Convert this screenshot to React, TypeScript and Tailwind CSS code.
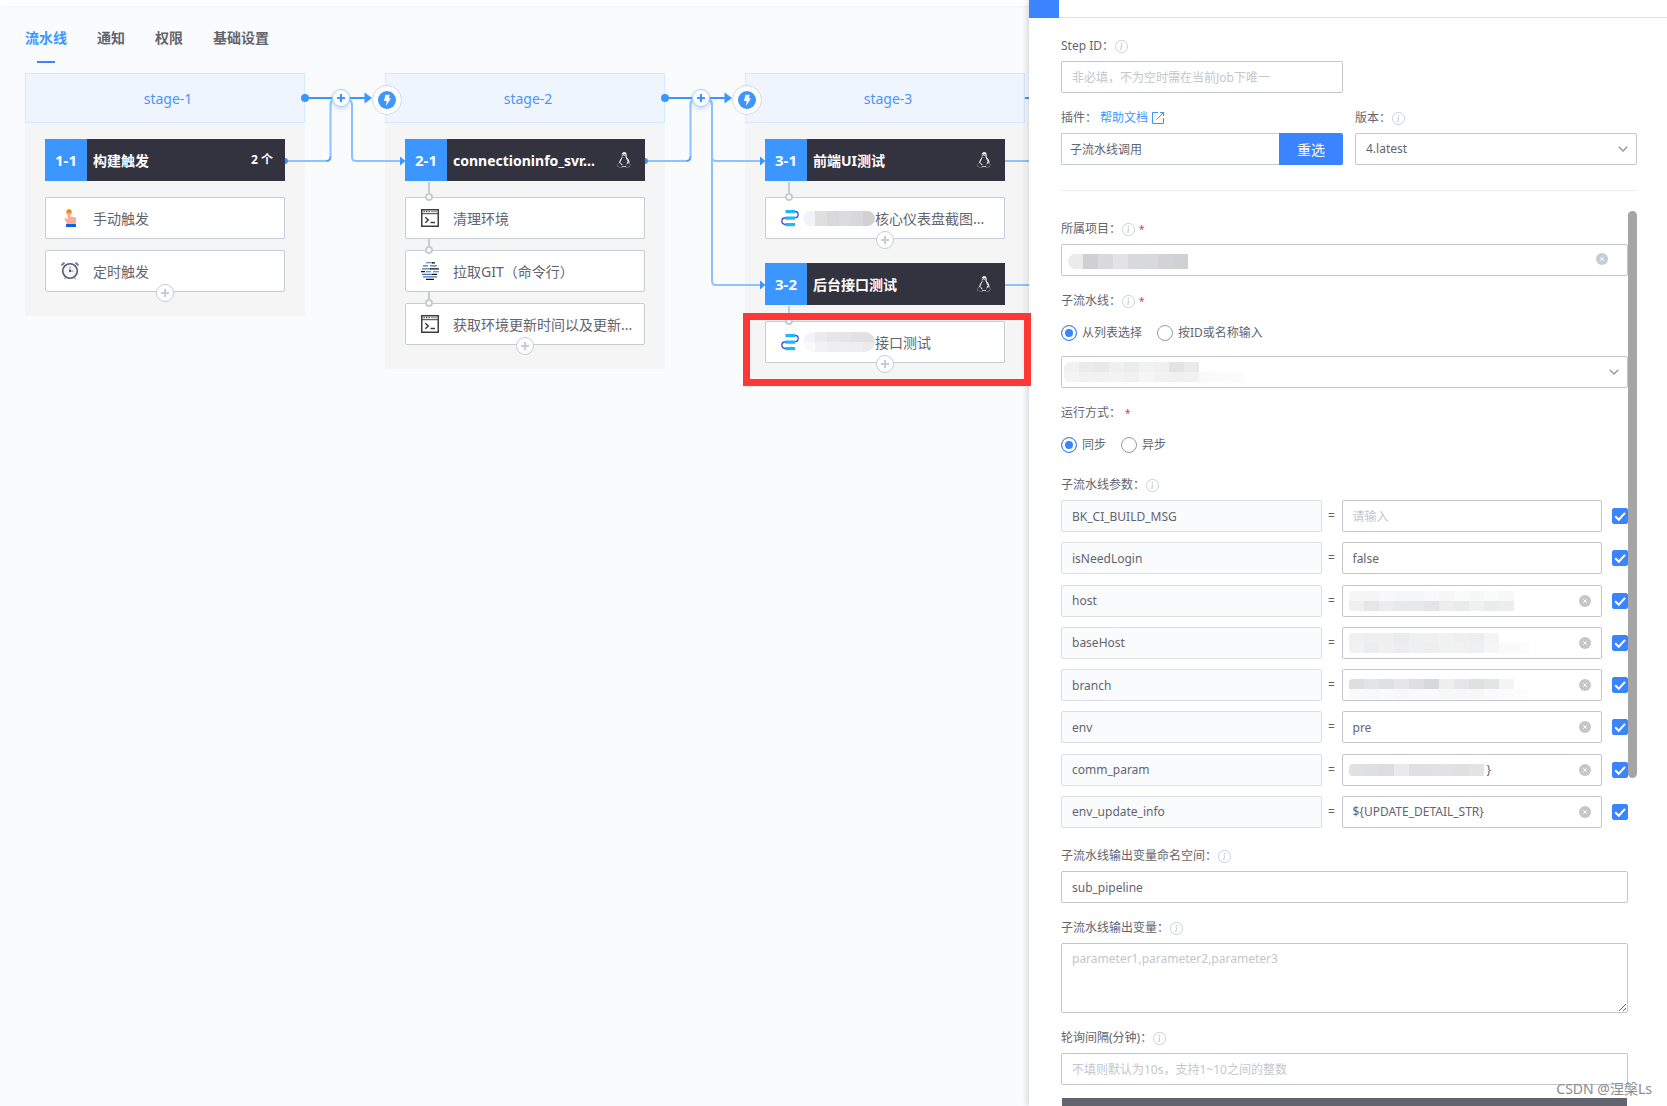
import type { ReactNode } from 'react';
import { FaLinux } from 'react-icons/fa';
import { BsInfoCircle } from 'react-icons/bs';
import clsx from 'clsx';

type IconName = 'hand' | 'clock' | 'terminal' | 'git' | 'sub';

interface TaskData {
  name: string;
  icon: IconName;
  masked?: 'tall' | 'short';
  marked?: boolean;
}

interface JobData {
  id: string;
  name: string;
  count?: string;
  tasks: TaskData[];
}

interface StageData {
  name: string;
  jobs: JobData[];
}

const TABS = ['流水线', '通知', '权限', '基础设置'];

const STAGES: StageData[] = [
  {
    name: 'stage-1',
    jobs: [
      {
        id: '1-1',
        name: '构建触发',
        count: '2 个',
        tasks: [
          { name: '手动触发', icon: 'hand' },
          { name: '定时触发', icon: 'clock' },
        ],
      },
    ],
  },
  {
    name: 'stage-2',
    jobs: [
      {
        id: '2-1',
        name: 'connectioninfo_svr...',
        tasks: [
          { name: '清理环境', icon: 'terminal' },
          { name: '拉取GIT（命令行）', icon: 'git' },
          { name: '获取环境更新时间以及更新...', icon: 'terminal' },
        ],
      },
    ],
  },
  {
    name: 'stage-3',
    jobs: [
      { id: '3-1', name: '前端UI测试', tasks: [{ name: '核心仪表盘截图...', icon: 'sub', masked: 'short' }] },
      { id: '3-2', name: '后台接口测试', tasks: [{ name: '接口测试', icon: 'sub', masked: 'tall', marked: true }] },
    ],
  },
];

interface Param {
  name: string;
  value: string;
  clear?: boolean;
  mask?: string[][];
  maskLow?: boolean;
}

const PARAMS: Param[] = [
  { name: 'BK_CI_BUILD_MSG', value: '' },
  { name: 'isNeedLogin', value: 'false' },
  {
    name: 'host',
    value: '',
    clear: true,
    mask: [
      ['#f6f6f7', '#f5f5f6', '#f8f8f8', '#f5f6f6', '#f6f8f7', '#f9f9f9', '#f6f6f7', '#fafafa', '#f6f7f7', '#fafafa', '#f8f8f9'],
      ['#f0f0f1', '#e5e6e7', '#ececee', '#e8e9ea', '#e9e9eb', '#e4e4e6', '#ededee', '#e9ebea', '#eff0f0', '#eaecec', '#ebecee'],
    ],
  },
  {
    name: 'baseHost',
    value: '',
    clear: true,
    mask: [
      ['#f0f0f1', '#efeff0', '#eeeff0', '#eaebec', '#eff0f0', '#f0f0f1', '#f1f2f2', '#efefef', '#eeeeef', '#f4f4f4'],
      ['#f1f1f2', '#ebeced', '#f0f0f1', '#ededef', '#eff0f1', '#eeeeef', '#f0f1f1', '#f1f1f2', '#eeeff0', '#f6f6f6', '#fafafa', '#fbfbfb'],
    ],
  },
  {
    name: 'branch',
    value: '',
    clear: true,
    maskLow: true,
    mask: [
      ['#dddee0', '#e3e4e5', '#dfe0e2', '#e6e6e8', '#dfdfe1', '#d7d8da', '#eeeeef', '#e6e6e8', '#dfe1e1', '#e4e5e6', '#f3f4f4'],
      ['#f9f9fa', '#f7f8f8', '#fafafa', '#f8f8f9', '#fafafa', '#fafafa', '#f6f8f7', '#f8f8f8', '#f7f7f8', '#fafafa', '#fbfbfb', '#fcfcfc'],
    ],
  },
  { name: 'env', value: 'pre', clear: true },
  {
    name: 'comm_param',
    value: '}',
    clear: true,
    maskLow: true,
    mask: [['#e1e1e3', '#dedfe0', '#dddddf', '#eaeaee', '#e0e0e2', '#e1e1e3', '#e2e2e4', '#e0e0e1', '#e3e3e5']],
  },
  { name: 'env_update_info', value: '${UPDATE_DETAIL_STR}', clear: true },
];

const inputBase = 'h-8 w-full rounded-xs border border-[#c4c6cc] bg-white px-[10px] text-[12px] text-[#63656e] outline-none placeholder:text-[#c4c6cc]';

export default function App() {
  return (
    <div className="flex h-screen overflow-hidden bg-[#fafbfd] font-['Noto_Sans','Noto_Sans_CJK_SC',sans-serif] text-[#63656e]">
      <main className="min-w-0 flex-1">
        <div className="h-1.5 bg-white shadow-[0_1px_3px_rgba(0,0,0,0.04)]" />
        <nav className="flex gap-[30px] pl-[25px]">
          {TABS.map((tab, i) => (
            <button
              key={tab}
              className={clsx('relative h-[57px] pb-[15px] pt-[22px] text-[14px] font-bold leading-5', i === 0 && 'text-[#3c96ff]')}
            >
              {tab}
              {i === 0 && <span className="absolute bottom-0 left-3 h-0.5 w-[18px] bg-[#3a84ff]" />}
            </button>
          ))}
        </nav>
        <div className="flex items-start pl-[25px] pt-[10px]">
          {STAGES.map((stage, i) => (
            <div key={stage.name} className="flex shrink-0 items-start">
              <Stage stage={stage} />
              {i < STAGES.length - 1 ? <Connector targets={STAGES[i + 1].jobs.length} /> : <OpenEnd />}
            </div>
          ))}
        </div>
      </main>
      <PluginPanel />
      <span className="absolute bottom-[7px] right-[15px] z-20 text-[14px] leading-5 text-[#8c8c8c] [text-shadow:1px_1px_0_#ffffff]">
        CSDN @涅槃Ls
      </span>
    </div>
  );
}

/* ---------- pipeline ---------- */

function Stage({ stage }: { stage: StageData }) {
  return (
    <section className="w-[280px] shrink-0">
      <h3 className="flex h-[50px] items-center justify-center border border-[#d4e8ff] bg-[#eff5ff] pl-1.5 text-[14px] text-[#4b94f5]">
        {stage.name}
      </h3>
      <div className="flex flex-col gap-6 rounded-b-xs bg-[#f5f5f5] px-5 pb-6 pt-4">
        {stage.jobs.map(job => (
          <Job key={job.id} job={job} />
        ))}
      </div>
    </section>
  );
}

function Job({ job }: { job: JobData }) {
  return (
    <div>
      <div className="flex h-[42px] items-center bg-[#33333f] text-[14px] font-bold text-white">
        <span className="flex size-[42px] items-center justify-center bg-[#3c96ff] text-[15px]">{job.id}</span>
        <span className="flex-1 truncate pl-1.5">{job.name}</span>
        {job.count ? (
          <span className="pr-3 text-[12px]">{job.count}</span>
        ) : (
          <FaLinux className="mr-[13px] size-4 shrink-0 text-[#e8e8ea]" />
        )}
      </div>
      <ul className="mt-4 flex flex-col gap-[11px]">
        {job.tasks.map((task, i) => (
          <Task key={task.name} task={task} first={i === 0} last={i === job.tasks.length - 1} linked={!job.count} />
        ))}
      </ul>
    </div>
  );
}

function Task({ task, first, last, linked }: { task: TaskData; first: boolean; last: boolean; linked: boolean }) {
  return (
    <li className="relative flex h-[42px] items-center rounded-xs border border-[#c4cdd6] bg-white pl-[15px] text-[14px]">
      {linked && (
        <>
          <span className={clsx('absolute left-[22px] w-0.5 bg-[#c4cdd6]', first ? '-top-4 h-3' : '-top-3 h-2')} />
          <span className="absolute -top-[5px] left-[19px] size-2 rounded-full border-2 border-[#c4cdd6] bg-white" />
        </>
      )}
      <TaskIcon name={task.icon} />
      {task.masked && (
        <span className="ml-1 flex w-[72px] flex-col overflow-hidden rounded-full">
          <Mosaic
            size={task.masked === 'tall' ? 'sm' : 'lg'}
            rows={
              task.masked === 'tall'
                ? [['#f1f4fb', '#ebebee', '#e6e6e8', '#e5e5e7', '#e2e2e4', '#e1e1e3'], ['#fafafa', '#f2f2f3', '#eeeeef', '#efeff0', '#eeeeef', '#ebebec']]
                : [['#f0f3fa', '#dfdfe0', '#d9d9dc', '#dcdcde', '#d8d8da', '#d1d1d4']]
            }
          />
        </span>
      )}
      <span className={clsx('truncate', !task.masked && 'ml-[14px]')}>{task.name}</span>
      {last && (
        <button
          aria-label="添加插件"
          className="absolute -bottom-[11px] left-[110px] flex size-[18px] items-center justify-center rounded-full border border-[#c4cdd6] bg-white text-[#c4cdd6]"
        >
          <Plus />
        </button>
      )}
      {task.marked && <span className="pointer-events-none absolute -bottom-6 -left-[23px] -right-[27px] -top-[9px] z-20 border-[7px] border-[#ff3737]" />}
    </li>
  );
}

function Plus() {
  return (
    <svg viewBox="0 0 8 8" className="size-2" stroke="currentColor" strokeWidth="2">
      <path d="M4 0v8M0 4h8" />
    </svg>
  );
}

// lines between two stages, one branch for every job of the next stage
function Connector({ targets }: { targets: number }) {
  const ends = Array.from({ length: targets }, (_, i) => 88 + i * 124);
  return (
    <div className="relative w-20 shrink-0">
      <svg className="absolute left-0 top-0 h-60 w-20 overflow-visible" fill="none">
        <g stroke="#8ec1ff" strokeWidth="2">
          <path d="M-18 88H21q4.500 0 4.500-4.500V32q0-4 3-6" />
          {ends.map(y => (
            <path key={y} d={`M43 26q4 2 4 6V${y - 4}q0 4 4 4H96`} />
          ))}
        </g>
        <path d="M21 88q4.500 0 4.500-4.500" stroke="#3c96ff" strokeWidth="1.200" />
        <path d="M0 25h60" stroke="#3c96ff" strokeWidth="2" />
        <g fill="#3c96ff">
          <circle cx="0" cy="25" r="4" />
          <path d="M59.500 19.500 67 25l-7.500 5.500z" />
          <path d="M-20 85a3 3 0 0 1 0 6z" />
          {ends.map(y => (
            <path key={y} d={`M95 ${y - 4.5} 100.500 ${y}l-5.500 4.500z`} />
          ))}
        </g>
      </svg>
      <button
        aria-label="添加阶段"
        className="absolute left-[27px] top-4 flex size-[18px] items-center justify-center rounded-full border border-[#a9d1ff] bg-white text-[#3c96ff] shadow-[0_2px_4px_rgba(60,150,255,0.3)]"
      >
        <Plus />
      </button>
      <button
        aria-label="准入规则"
        className="absolute left-[67px] top-3 flex size-[30px] items-center justify-center rounded-full border border-[#d3d8e8] bg-white"
      >
        <svg viewBox="0 0 18 18" className="size-[18px]">
          <circle cx="9" cy="9" r="9" fill="#3c96ff" />
          <path d="M7.500 3.800h4.300L10.800 7.300h2.200L8 15l.7-5H6z" fill="#fff" />
        </svg>
      </button>
    </div>
  );
}

function OpenEnd() {
  return (
    <div className="relative w-1 shrink-0">
      <svg className="absolute left-0 top-0 h-60 w-1 overflow-visible">
        <path d="M0 25h8" stroke="#3c96ff" strokeWidth="2" />
        <path d="M-20 88H8M-20 212H8" stroke="#8ec1ff" strokeWidth="2" />
      </svg>
    </div>
  );
}

function TaskIcon({ name }: { name: IconName }) {
  return (
    <svg viewBox="0 0 18 18" className="size-[18px] shrink-0" fill="none">
      {name === 'hand' && (
        <>
          <circle cx="8" cy="3" r="3" fill="#ffb11f" />
          <circle cx="8" cy="3" r="1.700" fill="#f4511e" />
          <path d="M6.500 3.600q0-1.300 1.400-1.300T9.300 3.600V7.500l4.700.8q1.400.3 1.300 1.700l-.6 5H6.200L3.800 11q-.7-1.600.5-2l2.200 1.300z" fill="#ffab9b" />
          <path d="M6.700 3.400q0-1.200 1.200-1.200t1.200 1.200z" fill="#f4511e" />
          <rect x="5" y="15" width="10" height="3" rx=".5" fill="#0b5fe8" />
        </>
      )}
      {name === 'clock' && (
        <>
          <path d="M1.200 2.800 2.800 1.200M16.800 2.800 15.200 1.200" stroke="#6f7cc4" strokeWidth="2.200" strokeLinecap="round" />
          <path d="M4.500 15.500 3.500 17.200M13.500 15.500l1 1.700" stroke="#9aa0b5" strokeWidth="1.200" />
          <circle cx="9" cy="9" r="7.300" fill="#f3f5f8" stroke="#565b6b" strokeWidth="1.600" />
          <path d="M9 4.500V9h3.500" stroke="#8a90a3" strokeWidth="1" />
          <circle cx="9" cy="9" r="1" fill="#33333f" />
        </>
      )}
      {name === 'terminal' && (
        <>
          <rect x=".75" y=".75" width="16.500" height="16.500" stroke="#3d3d43" strokeWidth="1.500" />
          <path d="M1 4.700h16" stroke="#3d3d43" strokeWidth="1" />
          <path d="M2.500 2.700h1.300M5 2.700h1.300M7.500 2.700h1.300" stroke="#3d3d43" strokeWidth="1.200" />
          <path d="M10 2.700h6.500" stroke="#9a9aa0" strokeWidth="1.200" />
          <path d="M4.300 8.300 7.300 11l-3 2.700M9.500 13.500h4.500" stroke="#3d3d43" strokeWidth="1.500" />
        </>
      )}
      {name === 'git' && (
        <>
          <path d="M5 .8h7M2 3.900h5M9 3.900h7M1 6.900h9M5 9.700h5M12 9.700h6M1 12.400h10M2 14.900h14" stroke="#4a72b0" strokeWidth="1.100" />
          <path d="M11 .8h3M9 6.900h9M0 9.700h4M11 12.400h5M5 17.300h8" stroke="#111" strokeWidth="1.300" />
        </>
      )}
      {name === 'sub' && (
        <>
          <path d="M13 2.500h1.500q2.700.3 2.700 3.100T14.500 8.700H13M5 9H3.700Q.8 9.300.8 12t2.900 3.500H5" stroke="#4459c6" strokeWidth="1.300" />
          <rect x="4.500" y="1" width="9.500" height="3.200" fill="#21b4ff" />
          <rect x="4.500" y="7.500" width="9.500" height="3.200" fill="#21b4ff" />
          <rect x="4.500" y="14" width="9.500" height="3.200" fill="#21b4ff" />
        </>
      )}
    </svg>
  );
}

/* ---------- side panel ---------- */

function PluginPanel() {
  return (
    <aside className="z-10 w-[638px] shrink-0 bg-white shadow-[-2px_0_6px_rgba(0,0,0,0.15)]">
      <div className="flex h-[18px]">
        <div className="w-[30px] bg-[#3a84ff]" />
        <div className="flex-1 border-b border-[#dfe0e5]" />
      </div>
      <form className="pl-8 pr-[30px] pt-[18px]">
        <div className="grid grid-cols-2 gap-x-3 gap-y-[15px]">
          <div className="col-span-2">
            <Label htmlFor="step" info>Step ID：</Label>
            <input id="step" placeholder="非必填，不为空时需在当前Job下唯一" className={clsx(inputBase, 'max-w-[282px]')} />
          </div>
          <div>
            <div className="flex gap-[3px]">
              <Label htmlFor="plugin">插件：</Label>
              <a href="#docs" className="flex h-5 items-center gap-1 text-[12px] text-[#3c96ff]">
                帮助文档
                <svg viewBox="0 0 12 12" className="size-3" fill="none" stroke="currentColor">
                  <path d="M6 .5H.5v11h11V6M8 .5h3.500V4M11.500.5 4.500 7.500" />
                </svg>
              </a>
            </div>
            <div className="flex">
              <input id="plugin" readOnly defaultValue="子流水线调用" className="h-8 min-w-0 flex-1 rounded-l-xs border border-r-0 border-[#c4cdd6] px-2 text-[12px] outline-none" />
              <button type="button" className="w-16 rounded-r-xs bg-[#3a84ff] text-[14px] text-white">重选</button>
            </div>
          </div>
          <div>
            <Label htmlFor="version" info>版本：</Label>
            <div className="relative">
              <select id="version" className={clsx(inputBase, 'appearance-none')}>
                <option>4.latest</option>
              </select>
              <Chevron />
            </div>
          </div>
        </div>

        <hr className="mt-[25px] border-[#e9edf2]" />

        <div className="relative flex flex-col gap-[15px] pr-[9px] pt-7">
          <span className="absolute right-0 top-5 h-[567px] w-[9px] rounded-full bg-[#a5a5a5]" />

          <div>
            <Label htmlFor="project" info required>所属项目：</Label>
            <div className="relative">
              <input id="project" className={inputBase} />
              <span className="absolute left-[7px] top-[10px] overflow-hidden rounded-l-full">
                <Mosaic size="lg" rows={[['#ebebec', '#d0d0d3', '#dadadc', '#e2e2e7', '#dadade', '#d8d9de', '#d3d3d6', '#d0d0d7']]} />
              </span>
              <ClearButton className="right-5 top-[9px] text-[#c3cddb]" />
            </div>
          </div>

          <div>
            <Label htmlFor="sub" info required>子流水线：</Label>
            <div className="flex h-8 items-center gap-[15px] pt-0.5">
              <Radio name="source" label="从列表选择" checked />
              <Radio name="source" label="按ID或名称输入" />
            </div>
            <div className="relative mt-2">
              <select id="sub" className={clsx(inputBase, 'appearance-none')} />
              <span className="absolute left-[3px] top-[6px] overflow-hidden rounded-l-md">
                <Mosaic
                  size="sm"
                  rows={[
                    ['#f1f1f2', '#eaebed', '#e8e8ea', '#eff0f1', '#ebecee', '#f1f3f2', '#f0f0f0', '#e3e3e5', '#eaeaeb'],
                    ['#f4f4f5', '#f1f1f2', '#f2f2f3', '#f3f3f4', '#f1f1f2', '#f4f5f4', '#f2f2f3', '#f0f0f1', '#f1f1f1', '#fafafa', '#fbfbfb', '#fcfcfc'],
                  ]}
                />
              </span>
              <Chevron />
            </div>
          </div>

          <div>
            <Label required>运行方式：</Label>
            <div className="flex h-8 items-center gap-[15px] pt-0.5">
              <Radio name="mode" label="同步" checked />
              <Radio name="mode" label="异步" />
            </div>
          </div>

          <div>
            <Label info>子流水线参数：</Label>
            <div className="grid min-h-[328px] content-between">
              {PARAMS.map(param => (
                <ParamRow key={param.name} param={param} />
              ))}
            </div>
          </div>

          <div className="pt-[3px]">
            <Label htmlFor="namespace" info>子流水线输出变量命名空间：</Label>
            <input id="namespace" defaultValue="sub_pipeline" className={inputBase} />
          </div>

          <div>
            <Label htmlFor="outputs" info>子流水线输出变量：</Label>
            <textarea
              id="outputs"
              placeholder="parameter1,parameter2,parameter3"
              className="block h-[70px] w-full rounded-xs border border-[#c4c6cc] px-[10px] py-1.5 text-[12px] leading-[18px] outline-none placeholder:text-[#c4c6cc]"
            />
          </div>

          <div>
            <Label htmlFor="interval" info>轮询间隔(分钟)：</Label>
            <input id="interval" placeholder="不填则默认为10s，支持1~10之间的整数" className={inputBase} />
            <div className="mx-px mt-[13px] h-10 bg-[#63656e]" />
          </div>
        </div>
      </form>
    </aside>
  );
}

function Label({ htmlFor, info, required, children }: { htmlFor?: string; info?: boolean; required?: boolean; children: ReactNode }) {
  return (
    <div className="mb-[5px] flex h-5 items-center text-[12px]">
      <label htmlFor={htmlFor}>{children}</label>
      {info && <BsInfoCircle className="ml-px mt-px size-[13px] text-[#c3cdd7]" />}
      {required && <span className="ml-1 text-[10px] text-[#ea3636]">*</span>}
    </div>
  );
}

function Radio({ name, label, checked }: { name: string; label: string; checked?: boolean }) {
  return (
    <label className="flex items-center gap-[5px] text-[12px]">
      <input
        type="radio"
        name={name}
        defaultChecked={checked}
        className="size-4 appearance-none rounded-full border border-[#979ba5] bg-white checked:border-[#3a84ff] checked:bg-[#3a84ff] checked:shadow-[inset_0_0_0_3px_#ffffff]"
      />
      {label}
    </label>
  );
}

function ParamRow({ param }: { param: Param }) {
  return (
    <div className="grid grid-cols-[1fr_20px_1fr_26px] items-center">
      <input
        readOnly
        aria-label="参数名"
        value={param.name}
        className="h-8 w-full min-w-0 rounded-xs border border-[#dcdee5] bg-[#fafbfd] px-[10px] text-[12px] outline-none"
      />
      <span className="text-center text-[12px]">=</span>
      <div className="relative min-w-0">
        <input
          aria-label={param.name}
          defaultValue={param.value}
          placeholder={param.value || param.mask ? undefined : '请输入'}
          className={clsx(inputBase, param.name === 'comm_param' && 'pl-[144px]')}
        />
        {param.mask && (
          <span className={clsx('absolute left-[7px] overflow-hidden rounded-l-sm', param.maskLow ? 'top-[10px]' : 'top-1.5')}>
            <Mosaic size={param.mask.length > 1 ? 'sm' : 'md'} rows={param.mask} />
          </span>
        )}
        {param.clear && <ClearButton className="right-[11px] top-[10px] text-[#c4c6cc]" />}
      </div>
      <span className="relative ml-[10px] flex size-4">
        <input
          type="checkbox"
          defaultChecked
          aria-label={`启用 ${param.name}`}
          className="peer size-4 appearance-none rounded-xs border border-[#979ba5] checked:border-[#3a84ff] checked:bg-[#3a84ff]"
        />
        <svg viewBox="0 0 16 16" className="pointer-events-none absolute inset-0 hidden size-4 peer-checked:block" fill="none">
          <path d="M3.200 8.300 6.800 11.700 13 4.800" stroke="#fff" strokeWidth="2" />
        </svg>
      </span>
    </div>
  );
}

function ClearButton({ className }: { className: string }) {
  return (
    <button type="button" aria-label="清空" className={clsx('absolute size-3', className)}>
      <svg viewBox="0 0 12 12" className="size-3">
        <circle cx="6" cy="6" r="6" fill="currentColor" />
        <path d="M4.300 4.300 7.700 7.700M7.700 4.300 4.300 7.700" stroke="#fff" />
      </svg>
    </button>
  );
}

function Chevron() {
  return (
    <svg viewBox="0 0 10 6" className="pointer-events-none absolute right-[9px] top-[13px] h-1.5 w-2.5" fill="none">
      <path d="M.8.8 5 5 9.200.8" stroke="#979ba5" strokeWidth="1.500" />
    </svg>
  );
}

// pixelated strip over hidden values
function Mosaic({ rows, size }: { rows: string[][]; size: 'sm' | 'md' | 'lg' }) {
  return (
    <>
      {rows.map((row, i) => (
        <span key={i} className="flex">
          {row.map((color, j) => (
            <span
              key={j}
              className={clsx('w-[15px] shrink', size === 'sm' && 'h-[10px]', size === 'md' && 'h-3', size === 'lg' && 'h-[15px]')}
              style={{ backgroundColor: color }}
            />
          ))}
        </span>
      ))}
    </>
  );
}
